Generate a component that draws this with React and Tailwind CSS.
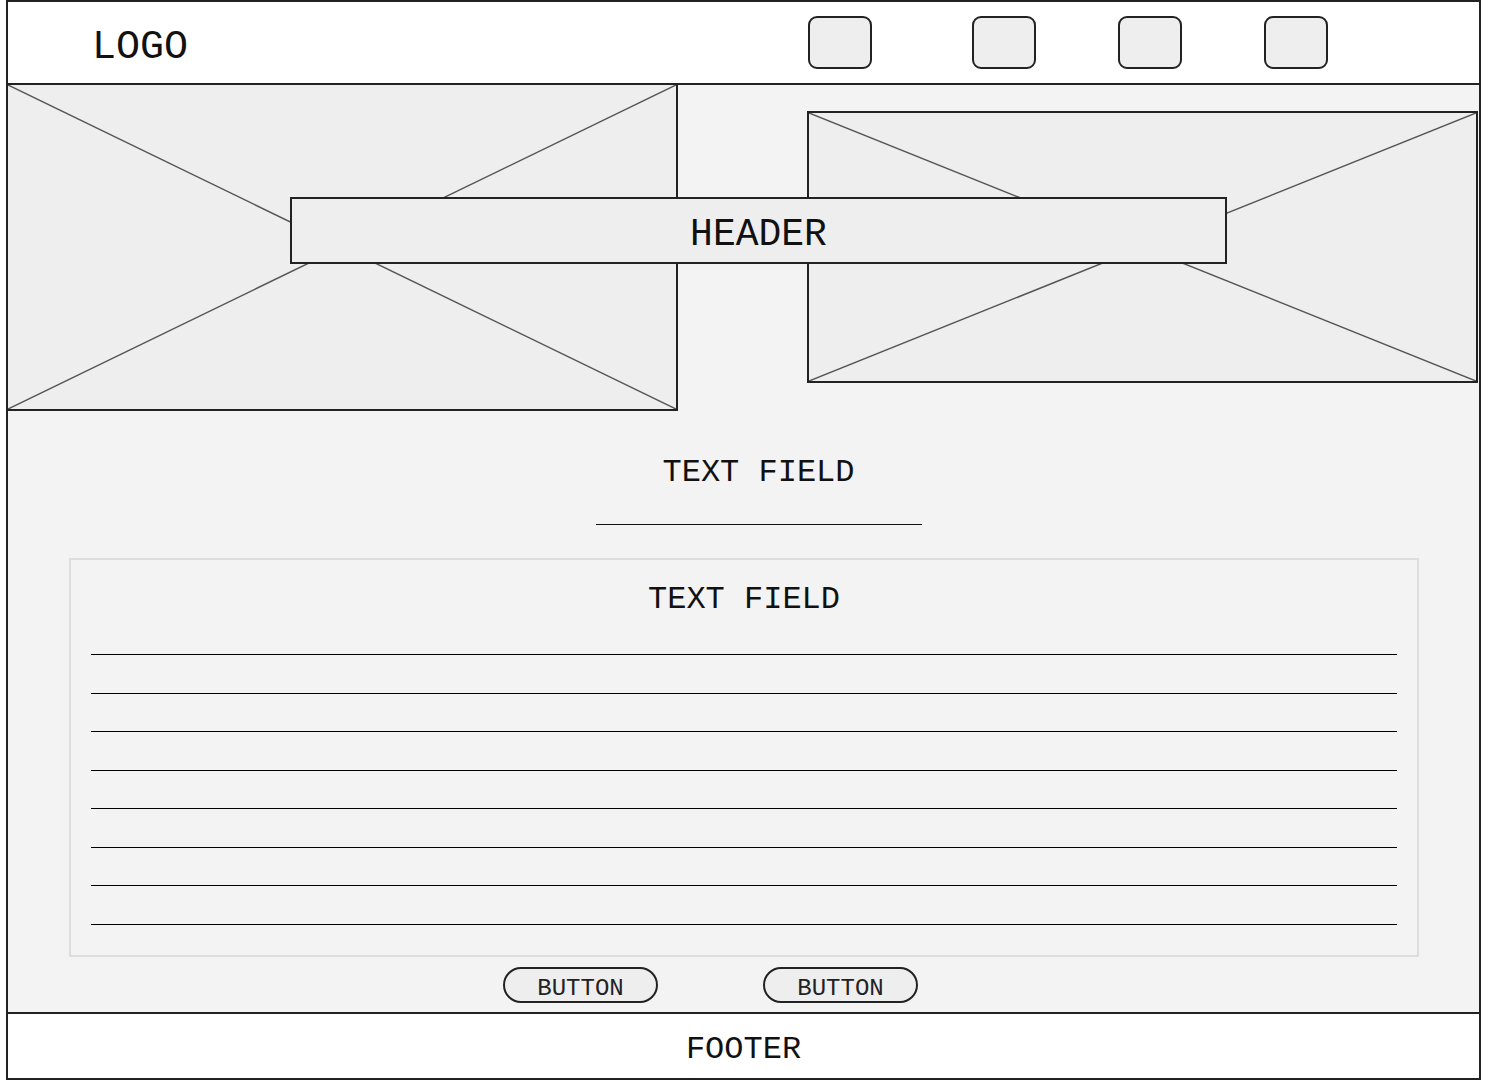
import React from 'react';

const mono = { fontFamily: '"Liberation Mono", "Courier New", monospace' };

const Placeholder = ({ className }) => (
  <div className={`relative bg-[#eeeeee] ${className}`}>
    <svg className="absolute inset-0 h-full w-full" preserveAspectRatio="none" viewBox="0 0 100 100">
      <line x1="0" y1="0" x2="100" y2="100" stroke="#555" strokeWidth="1.5" vectorEffect="non-scaling-stroke" />
      <line x1="100" y1="0" x2="0" y2="100" stroke="#555" strokeWidth="1.5" vectorEffect="non-scaling-stroke" />
    </svg>
  </div>
);

const NavBox = ({ className = '' }) => (
  <div className={`h-[53px] w-[64px] rounded-[9px] border-2 border-[#222] bg-[#eeeeee] ${className}`} />
);

const PillButton = ({ label }) => (
  <button className="flex h-[36px] w-[155px] items-center justify-center rounded-full border-2 border-[#222] bg-[#eeeeee] pt-[7px] text-[24px] leading-none text-[#222]">
    {label}
  </button>
);

// spacing between the ruled lines alternates 39 / 38 px
const lineGaps = ['mt-[38px]', 'mt-[38px]', 'mt-[37px]', 'mt-[38px]', 'mt-[37px]', 'mt-[38px]', 'mt-[37px]', 'mt-[38px]'];

export default function App() {
  return (
    <div className="h-[1080px] w-full overflow-hidden bg-white text-[#111]" style={mono}>
      <div className="ml-[6px] flex h-[1080px] w-[1475px] flex-col border-2 border-[#222]">
        {/* top nav */}
        <div className="flex h-[83px] shrink-0 items-center border-b-2 border-[#222] bg-white">
          <div className="pl-[84px] pt-[11px] text-[40px] leading-none">LOGO</div>
          <div className="ml-auto mr-[151px] flex items-center pb-[1px]">
            <NavBox />
            <NavBox className="ml-[100px]" />
            <NavBox className="ml-[82px]" />
            <NavBox className="ml-[82px]" />
          </div>
        </div>

        {/* main */}
        <div className="flex flex-1 flex-col bg-[#f3f3f3]">
          <div className="relative flex items-start">
            <Placeholder className="h-[326px] w-[670px] border-b-2 border-r-2 border-[#222]" />
            <Placeholder className="ml-[129px] mt-[26px] h-[272px] w-[671px] border-2 border-[#222]" />
            <div className="absolute left-[282px] top-[112px] flex h-[67px] w-[937px] items-center justify-center border-2 border-[#222] bg-[#eeeeee] pt-[8px] text-[38px] leading-none">
              HEADER
            </div>
          </div>

          <div className="flex flex-col items-center pl-[30px]">
            <div className="mt-[46px] text-[32px] leading-none">TEXT FIELD</div>
            <div className="mt-[35px] h-px w-[326px] bg-[#111]" />
          </div>

          <div className="ml-[61px] mr-[60px] mt-[33px] flex h-[399px] flex-col items-center border-2 border-[#dddddd] px-[20px]">
            <div className="mt-[24px] text-[32px] leading-none">TEXT FIELD</div>
            <div className="flex w-full flex-col">
              {lineGaps.map((gap, i) => (
                <div key={i} className={`h-px w-full bg-black ${gap}`} />
              ))}
            </div>
          </div>

          <div className="mt-[10px] flex pl-[495px]">
            <PillButton label="BUTTON" />
            <div className="ml-[105px]">
              <PillButton label="BUTTON" />
            </div>
          </div>
        </div>

        {/* footer */}
        <div className="flex h-[66px] shrink-0 items-center justify-center border-t-2 border-[#222] bg-white pt-[8px] text-[32px] leading-none">
          FOOTER
        </div>
      </div>
    </div>
  );
}
